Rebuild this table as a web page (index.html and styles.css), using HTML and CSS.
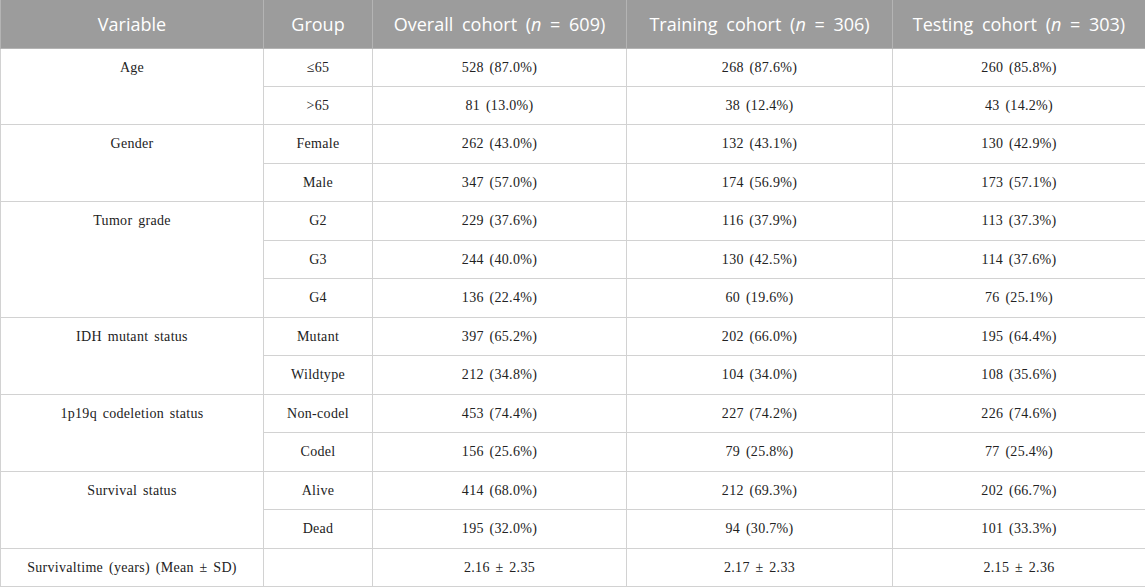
FILE: index.html
```html
<!DOCTYPE html>
<html>
<head>
<meta charset="utf-8">
<link rel="stylesheet" href="styles.css">
</head>
<body>
<table class="data">
  <colgroup>
    <col class="c-var"><col class="c-grp"><col class="c-all"><col class="c-trn"><col class="c-tst">
  </colgroup>
  <thead>
    <tr>
      <th>Variable</th>
      <th>Group</th>
      <th>Overall cohort (<i>n</i> = 609)</th>
      <th>Training cohort (<i>n</i> = 306)</th>
      <th>Testing cohort (<i>n</i> = 303)</th>
    </tr>
  </thead>
  <tbody>
    <tr><td class="var" rowspan="2">Age</td><td>≤65</td><td>528 (87.0%)</td><td>268 (87.6%)</td><td>260 (85.8%)</td></tr>
    <tr><td>&gt;65</td><td>81 (13.0%)</td><td>38 (12.4%)</td><td>43 (14.2%)</td></tr>
    <tr class="row-lg"><td class="var" rowspan="2">Gender</td><td>Female</td><td>262 (43.0%)</td><td>132 (43.1%)</td><td>130 (42.9%)</td></tr>
    <tr><td>Male</td><td>347 (57.0%)</td><td>174 (56.9%)</td><td>173 (57.1%)</td></tr>
    <tr class="row-lg"><td class="var" rowspan="3">Tumor grade</td><td>G2</td><td>229 (37.6%)</td><td>116 (37.9%)</td><td>113 (37.3%)</td></tr>
    <tr><td>G3</td><td>244 (40.0%)</td><td>130 (42.5%)</td><td>114 (37.6%)</td></tr>
    <tr class="row-lg"><td>G4</td><td>136 (22.4%)</td><td>60 (19.6%)</td><td>76 (25.1%)</td></tr>
    <tr><td class="var" rowspan="2">IDH mutant status</td><td>Mutant</td><td>397 (65.2%)</td><td>202 (66.0%)</td><td>195 (64.4%)</td></tr>
    <tr class="row-lg"><td>Wildtype</td><td>212 (34.8%)</td><td>104 (34.0%)</td><td>108 (35.6%)</td></tr>
    <tr><td class="var" rowspan="2">1p19q codeletion status</td><td>Non-codel</td><td>453 (74.4%)</td><td>227 (74.2%)</td><td>226 (74.6%)</td></tr>
    <tr class="row-lg"><td>Codel</td><td>156 (25.6%)</td><td>79 (25.8%)</td><td>77 (25.4%)</td></tr>
    <tr><td class="var" rowspan="2">Survival status</td><td>Alive</td><td>414 (68.0%)</td><td>212 (69.3%)</td><td>202 (66.7%)</td></tr>
    <tr class="row-lg"><td>Dead</td><td>195 (32.0%)</td><td>94 (30.7%)</td><td>101 (33.3%)</td></tr>
    <tr><td class="var">Survivaltime (years) (Mean ± SD)</td><td></td><td>2.16 ± 2.35</td><td>2.17 ± 2.33</td><td>2.15 ± 2.36</td></tr>
  </tbody>
</table>
</body>
</html>
```
FILE: styles.css
```css
html, body {
  margin: 0;
  padding: 0;
  background: #ffffff;
}

.data {
  width: 1145px;
  border-collapse: collapse;
  table-layout: fixed;
}

.c-var { width: 263px; }
.c-grp { width: 109px; }
.c-all { width: 254px; }
.c-trn { width: 266px; }
.c-tst { width: 253px; }

.data th {
  height: 48px;
  padding: 0;
  background: #9c9c9c;
  color: #ffffff;
  font-family: "Open Sans", "Noto Sans", sans-serif;
  font-weight: 400;
  font-size: 18px;
  word-spacing: 4px;
  text-align: center;
  vertical-align: middle;
  border: 1px solid #b4b4b4;
  border-top: none;
}

.data th i {
  font-style: italic;
}

.data td {
  height: 37px;
  padding: 0;
  font-family: "Liberation Serif", "Times New Roman", serif;
  font-size: 14px;
  letter-spacing: 0.3px;
  word-spacing: 2px;
  color: #222222;
  text-align: center;
  vertical-align: middle;
  border: 1px solid #d2d2d2;
}

.data .row-lg td {
  height: 38px;
}

.data td.var {
  vertical-align: top;
  padding-top: 11px;
  line-height: 16px;
  height: auto;
}
```
